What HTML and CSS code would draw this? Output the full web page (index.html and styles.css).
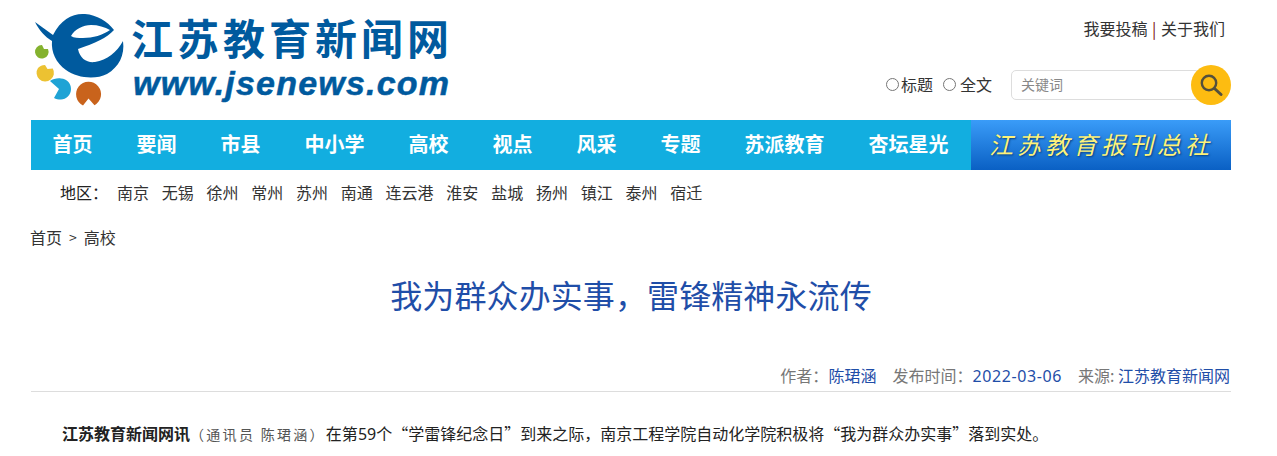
FILE: index.html
```html
<!DOCTYPE html>
<html lang="zh-CN">
<head>
    <meta charset="UTF-8">
    <title>我为群众办实事，雷锋精神永流传</title>
    <link rel="stylesheet" href="styles.css">
</head>
<body>
    <div class="wrap">
        <header class="top">
            <a class="logo" href="#">
                <svg class="logo-mark" viewBox="6 0 98 105" width="98" height="105">
                    <path fill="#005a9e" fill-rule="evenodd" d="M10 17 L28 30 C36 14 48 8 60 9 C72 10 82 16 89 25 C82 33 70 38 53 44 C55 54 62 58 70 57 C82 55 92 47 98 36 C100 50 94 62 82 69 C70 75 52 73 41 65 C31 58 26 47 27 36 C20 32 14 25 10 17 Z M46 31 C50 24 58 20 66 20 C73 20 80 22 85 25 C78 30 68 33 58 33 C53 33 49 33 46 31 Z"/>
                    <path fill="#84b22e" d="M17 40 L19 44 L23 44 A6.8 6.8 0 1 1 17 40 Z"/>
                    <path fill="#ecc232" d="M20 60 L22.5 64 L27.8 63.5 A8.7 8.7 0 1 1 13 63 C15 61 17 60 20 60 Z"/>
                    <path fill="#1fa3d5" d="M25 76 C28 74 32 73 36 73.5 C42 74 46 78 46 84 C46 90 41 94.5 36 94.5 C33 94.5 31 94 29 93 L34 84 Z"/>
                    <path fill="#c9631c" d="M58 100.4 L63.5 93.5 L69.5 100.2 A12.5 12.5 0 1 0 58 100.4 Z"/>
                </svg>
                <div class="logo-text">
                    <div class="logo-cn">江苏教育新闻网</div>
                    <div class="logo-en">www.jsenews.com</div>
                </div>
            </a>
            <div class="top-right">
                <div class="top-links"><a href="#">我要投稿</a> <span class="bar">|</span> <a href="#">关于我们</a></div>
                <form class="search">
                    <label class="radio"><input type="radio" name="scope">标题</label>
                    <label class="radio"><input type="radio" name="scope">全文</label>
                    <input class="search-input" type="text" placeholder="关键词">
                    <button class="search-btn" type="button" aria-label="搜索">
                        <svg viewBox="0 0 24 24" width="24" height="24"><circle cx="10" cy="10" r="7.2" fill="none" stroke="#54503c" stroke-width="2.4"/><path d="M15.5 15.5 L22 21.5" stroke="#54503c" stroke-width="3" stroke-linecap="round"/></svg>
                    </button>
                </form>
            </div>
        </header>

        <nav class="nav">
            <ul class="nav-list">
                <li><a href="#">首页</a></li>
                <li><a href="#">要闻</a></li>
                <li><a href="#">市县</a></li>
                <li><a href="#">中小学</a></li>
                <li><a href="#">高校</a></li>
                <li><a href="#">视点</a></li>
                <li><a href="#">风采</a></li>
                <li><a href="#">专题</a></li>
                <li><a href="#">苏派教育</a></li>
                <li><a href="#">杏坛星光</a></li>
            </ul>
            <a class="nav-banner" href="#">江苏教育报刊总社</a>
        </nav>

        <div class="areas">
            <span class="areas-label">地区：</span>
            <a href="#">南京</a><a href="#">无锡</a><a href="#">徐州</a><a href="#">常州</a><a href="#">苏州</a><a href="#">南通</a><a href="#">连云港</a><a href="#">淮安</a><a href="#">盐城</a><a href="#">扬州</a><a href="#">镇江</a><a href="#">泰州</a><a href="#">宿迁</a>
        </div>

        <div class="crumbs"><a href="#">首页</a><span class="sep">&gt;</span><a href="#">高校</a></div>

        <h1 class="title">我为群众办实事，雷锋精神永流传</h1>

        <div class="meta">
            <span>作者：<b>陈珺涵</b></span>
            <span>发布时间：<b class="date">2022-03-06</b></span>
            <span>来源: <b>江苏教育新闻网</b></span>
        </div>

        <p class="lead"><strong>江苏教育新闻网讯</strong><span class="byline">（通讯员 陈珺涵）</span>在第<span class="num">59</span>个“学雷锋纪念日”到来之际，南京工程学院自动化学院积极将“我为群众办实事”落到实处。</p>
    </div>
</body>
</html>
```

FILE: styles.css
```css
* {
    margin: 0;
    padding: 0;
    box-sizing: border-box;
}
html, body {
    height: 456px;
    overflow: hidden;
}
body {
    font-family: "Noto Sans CJK SC", "Noto Sans", sans-serif;
    font-size: 16px;
    color: #333;
    background: #fff;
}
a {
    color: inherit;
    text-decoration: none;
}
.wrap {
    width: 1200px;
    margin-left: 31px;
}
.top {
    display: flex;
    justify-content: space-between;
    height: 120px;
}
.logo {
    display: flex;
    padding-top: 5px;
    gap: 4px;
}
.logo-mark {
    display: block;
}
.logo-text {
    padding-top: 12px;
    margin-left: -2px;
    color: #005a9e;
}
.logo-cn {
    font-family: "Liberation Sans", "Noto Sans CJK SC", sans-serif;
    font-weight: 700;
    font-size: 42px;
    line-height: 48px;
    letter-spacing: 4px;
    white-space: nowrap;
}
.logo-en {
    margin-top: 1px;
    padding-left: 2px;
    font-family: "Liberation Sans", sans-serif;
    font-weight: 700;
    font-style: italic;
    font-size: 34px;
    line-height: 34px;
    letter-spacing: 1.2px;
    -webkit-text-stroke: 0.5px #005a9e;
}
.top-right {
    display: flex;
    flex-direction: column;
    align-items: flex-end;
}
.top-links {
    padding: 17px 6px 0 0;
    line-height: 22px;
    word-spacing: 1px;
    white-space: nowrap;
}
.bar {
    color: #7a1010;
}
.search {
    display: flex;
    align-items: center;
    margin-top: 26px;
}
.radio {
    display: flex;
    align-items: center;
    margin-right: 10px;
    padding-bottom: 2px;
    line-height: 38px;
}
.radio input {
    width: 13px;
    height: 13px;
    margin: 0 2px 0 0;
}
.radio + .radio input {
    margin-right: 4px;
}
.search-input {
    width: 189px;
    height: 30px;
    margin-left: 9px;
    padding: 0 0 2px 9px;
    border: 1px solid #ddd;
    border-radius: 5px;
    font: 14px "Noto Sans CJK SC", sans-serif;
}
.search-input::placeholder {
    color: #888;
}
.search-btn {
    display: flex;
    align-items: center;
    justify-content: center;
    width: 40px;
    height: 40px;
    margin-left: -9px;
    border: none;
    border-radius: 50%;
    background: #fdbc11;
}
.nav {
    display: flex;
    justify-content: space-between;
    height: 50px;
    background: #12aee0;
}
.nav-list {
    display: flex;
    list-style: none;
    margin-left: -0.5px;
}
.nav-list a {
    display: block;
    padding: 0 22px;
    color: #fff;
    font-size: 20px;
    font-weight: 700;
    line-height: 48px;
    white-space: nowrap;
}
.nav-banner {
    width: 260px;
    text-align: center;
    background: linear-gradient(#3a9cf8, #0a60c4);
    color: #fdf27a;
    font-size: 24px;
    font-style: italic;
    line-height: 48px;
    letter-spacing: 4px;
    text-shadow: 1px 1px 2px #06407f;
}
.areas {
    display: flex;
    align-items: center;
    height: 47px;
    padding: 0 0 3px 29px;
}
.areas-label {
    width: 57px;
    color: #222;
}
.areas a {
    margin-right: 12.75px;
}
.crumbs {
    display: flex;
    align-items: center;
    margin: 7px 0 0 -1px;
    line-height: 26px;
}
.sep {
    margin: 0 7px;
    font-size: 14px;
}
.title {
    margin-top: 21px;
    text-align: center;
    color: #1f4ea8;
    font-size: 32px;
    font-weight: 400;
    line-height: 46px;
    letter-spacing: 0.1px;
}
.meta {
    display: flex;
    justify-content: flex-end;
    gap: 16px;
    margin-top: 44px;
    height: 31px;
    padding-right: 1px;
    border-bottom: 1px solid #ddd;
    color: #777;
    line-height: 28px;
}
.meta b {
    font-weight: 400;
    color: #1f4ea8;
}
.date {
    font-family: "Noto Sans", sans-serif;
    letter-spacing: 0.6px;
}
.lead {
    margin-top: 26px;
    text-indent: 31px;
    line-height: 30px;
    color: #222;
    white-space: nowrap;
}
.byline {
    font-size: 14px;
    color: #555;
    letter-spacing: 2.3px;
}
.num {
    font-family: "Noto Sans", sans-serif;
}
```
